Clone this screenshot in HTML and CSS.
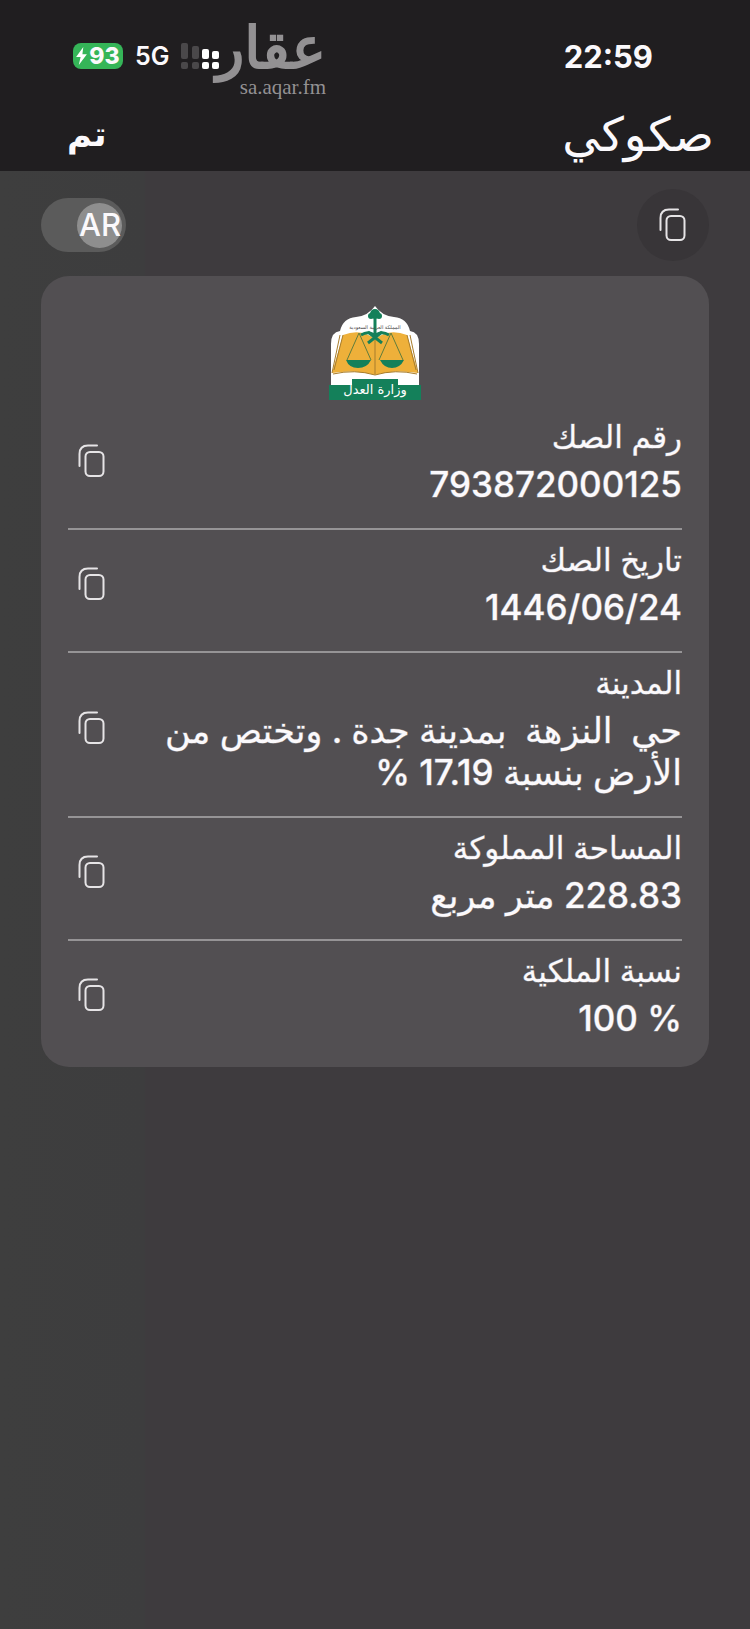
FILE: index.html
```
<!DOCTYPE html>
<html lang="ar" dir="rtl">
  <head>
    <meta charset="UTF-8" />
    <meta name="viewport" content="width=device-width, initial-scale=1.0" />
    <title>صكوكي</title>
    <link rel="stylesheet" href="styles.css">
  </head>
  <body>
    <svg class="sprite" aria-hidden="true">
      <symbol id="copy" viewBox="0 0 28 34">
        <path d="M1.5 22V10Q1.5 1.5 10 1.5H19" />
        <rect x="7.5" y="8" width="18" height="24" rx="4.5" />
      </symbol>
    </svg>

    <header class="header">
      <div class="status-bar">
        <span class="time">22:59</span>
        <div class="indicators" dir="ltr">
          <div class="battery">
            <svg class="bolt" viewBox="0 0 12 20"><path d="M8 0L0 11h5L3 20l9-12H7z" /></svg>
            <span>93</span>
          </div>
          <span class="network">5G</span>
          <svg class="signal" viewBox="0 0 38 26">
            <g class="dim">
              <rect x="0" y="0" width="7" height="16" rx="2" />
              <rect x="11" y="3" width="7" height="13" rx="2" />
              <rect x="0" y="19" width="7" height="7" rx="2" />
              <rect x="11" y="19" width="7" height="7" rx="2" />
            </g>
            <rect x="21" y="6" width="7" height="10" rx="2" />
            <rect x="31" y="8" width="7" height="8" rx="2" />
            <rect x="21" y="19" width="7" height="7" rx="2" />
            <rect x="31" y="19" width="7" height="7" rx="2" />
          </svg>
        </div>
        <div class="watermark">
          <span class="watermark-name">عقار</span>
          <span class="watermark-site" dir="ltr">sa.aqar.fm</span>
        </div>
      </div>
      <div class="title-bar">
        <h1>صكوكي</h1>
        <button class="done">تم</button>
      </div>
    </header>

    <main class="content">
      <div class="toolbar">
        <button class="copy-all" aria-label="نسخ الكل"><svg class="icon"><use href="#copy" /></svg></button>
        <label class="toggle">
          <input type="checkbox" checked />
          <span>AR</span>
        </label>
      </div>

      <section class="card">
        <svg class="emblem" viewBox="0 0 92 94">
          <path class="white" d="M2 84V38Q2 26 11 25Q14 12 27 11Q39 10 46 0Q53 10 65 11Q78 12 81 25Q90 26 90 38V84z" />
          <path class="pages" d="M14 29Q32 22 46 33Q60 22 78 29L89 67Q66 63 46 69Q26 63 3 67z" />
          <path class="page-edge" d="M14 29L5 64M11 29L3 67M78 29L87 64M81 29L89 67M4 68Q26 63 46 69Q66 63 88 68M46 34V68" />
          <path class="beam" d="M30 27L18 54M30 27L42 54M62 27L50 54M62 27L74 54" />
          <path class="swords" d="M46 10V30M32 29Q40 24 46 30Q52 24 60 29M39 37L53 26M53 37L39 26" />
          <circle class="green" cx="46" cy="8" r="5" />
          <circle class="green" cx="42" cy="10" r="3" />
          <circle class="green" cx="50" cy="10" r="3" />
          <path class="green" d="M17 54H42Q38 62 29 62T17 54zM51 54H75Q71 62 63 62T51 54z" />
          <path class="green" d="M0 79H23V73H69V79H92V94H0z" />
          <text class="emblem-top" x="46" y="23">المملكة العربية السعودية</text>
          <text class="emblem-name" x="46" y="88">وزارة العدل</text>
        </svg>

        <div class="row">
          <div class="field">
            <h2>رقم الصك</h2>
            <p>793872000125</p>
          </div>
          <button class="copy" aria-label="نسخ رقم الصك"><svg class="icon"><use href="#copy" /></svg></button>
        </div>
        <div class="row">
          <div class="field">
            <h2>تاريخ الصك</h2>
            <p>1446/06/24</p>
          </div>
          <button class="copy" aria-label="نسخ تاريخ الصك"><svg class="icon"><use href="#copy" /></svg></button>
        </div>
        <div class="row">
          <div class="field">
            <h2>المدينة</h2>
            <p>حي&nbsp; النزهة&nbsp; بمدينة جدة . وتختص من الأرض بنسبة 17.19 %</p>
          </div>
          <button class="copy" aria-label="نسخ المدينة"><svg class="icon"><use href="#copy" /></svg></button>
        </div>
        <div class="row">
          <div class="field">
            <h2>المساحة المملوكة</h2>
            <p>228.83 متر مربع</p>
          </div>
          <button class="copy" aria-label="نسخ المساحة"><svg class="icon"><use href="#copy" /></svg></button>
        </div>
        <div class="row">
          <div class="field">
            <h2>نسبة الملكية</h2>
            <p>% 100</p>
          </div>
          <button class="copy" aria-label="نسخ نسبة الملكية"><svg class="icon"><use href="#copy" /></svg></button>
        </div>
      </section>
    </main>
  </body>
</html>
```

FILE: styles.css
```
* {
  box-sizing: border-box;
}

body {
  margin: 0;
  min-height: 100vh;
  background: linear-gradient(to right, #3e3e3e 0, #3d3d3e 144px, #3e3b3e 146px);
  color: #fbf9fc;
  font-family: Inter, 'DejaVu Sans', sans-serif;
}

h1,
h2,
p {
  margin: 0;
  font-weight: normal;
}

button {
  display: flex;
  align-items: center;
  justify-content: center;
  padding: 0;
  border: none;
  background: none;
  color: inherit;
  font-family: inherit;
  cursor: pointer;
}

.sprite {
  display: none;
}

.icon {
  width: 28px;
  height: 34px;
  fill: none;
  stroke: #e6e4e6;
  stroke-width: 2;
  stroke-linecap: round;
}

.header {
  height: 171px;
  background: #201e20;
}

.status-bar {
  position: relative;
  display: flex;
  align-items: center;
  justify-content: space-between;
  height: 96px;
  padding: 16px 97px 0 73px;
}

.time {
  font-size: 31px;
  font-weight: 700;
}

.indicators {
  display: flex;
  align-items: center;
}

.battery {
  display: flex;
  align-items: center;
  justify-content: center;
  gap: 2px;
  width: 50px;
  height: 26px;
  margin-right: 12px;
  border-radius: 8px;
  background: #35b558;
  font-size: 23px;
  font-weight: 800;
}

.bolt {
  width: 11px;
  height: 18px;
  fill: #fff;
}

.network {
  margin-right: 12px;
  font-size: 25px;
  font-weight: 600;
}

.signal {
  width: 38px;
  height: 26px;
  fill: #fff;
}

.signal .dim {
  fill: #4a484a;
}

.watermark {
  position: absolute;
  top: 20px;
  left: 213px;
  display: flex;
  flex-direction: column;
  width: 113px;
  color: #939193;
}

.watermark-name {
  height: 56px;
  font-family: 'DejaVu Sans', sans-serif;
  font-size: 58px;
  line-height: 56px;
  -webkit-text-stroke: 2px #939193;
}

.watermark-site {
  font-family: 'Liberation Serif', serif;
  font-size: 21px;
  line-height: 22px;
  text-align: right;
}

.title-bar {
  display: flex;
  align-items: center;
  justify-content: space-between;
  height: 75px;
  padding: 0 36px 0 67px;
}

.title-bar h1 {
  font-size: 47px;
  line-height: 60px;
}

.done {
  font-size: 34px;
  font-weight: 700;
}

.content {
  padding: 18px 41px;
}

.toolbar {
  display: flex;
  align-items: center;
  justify-content: space-between;
  height: 72px;
  margin-bottom: 15px;
}

.copy-all {
  width: 72px;
  height: 72px;
  border-radius: 50%;
  background: #383538;
}

.toggle {
  position: relative;
  display: flex;
  font-size: 31px;
  font-weight: 500;
}

.toggle input {
  display: flex;
  align-items: center;
  appearance: none;
  width: 85px;
  height: 54px;
  margin: 0;
  padding: 4px;
  border-radius: 27px;
  background: #5b5b5b;
}

.toggle input::before {
  content: '';
  width: 45px;
  height: 45px;
  border-radius: 50%;
  background: #8e8e8e;
}

.toggle span {
  position: absolute;
  right: 5px;
  line-height: 54px;
}

.card {
  padding: 30px 27px 5px;
  border-radius: 28px;
  background: #524f52;
}

.emblem {
  display: block;
  width: 92px;
  height: 94px;
  margin: 0 auto 7px;
}

.emblem .white {
  fill: #fff;
}

.emblem .pages {
  fill: #eeb03a;
}

.emblem .page-edge {
  fill: none;
  stroke: #a87d2c;
}

.emblem .beam {
  fill: none;
  stroke: #5f7d3c;
}

.emblem .swords {
  fill: none;
  stroke: #14805a;
  stroke-width: 3;
}

.emblem .green {
  fill: #14805a;
}

.emblem text {
  font-family: 'DejaVu Sans', sans-serif;
  text-anchor: middle;
}

.emblem-top {
  fill: #444;
  font-size: 5px;
}

.emblem-name {
  fill: #fff;
  font-size: 13px;
}

.row {
  display: flex;
  align-items: center;
  justify-content: space-between;
  padding: 9px 0 23px;
  border-bottom: 2px solid #969496;
}

.row:last-child {
  border-bottom: none;
}

.field {
  flex: 1;
  -webkit-text-stroke: 1px rgba(251, 249, 252, 0.35);
}

.field h2 {
  margin-bottom: 5px;
  font-size: 31px;
  line-height: 42px;
}

.field p {
  font-size: 35px;
  font-weight: 500;
  line-height: 42px;
}

.copy {
  width: 48px;
  height: 50px;
}
```
